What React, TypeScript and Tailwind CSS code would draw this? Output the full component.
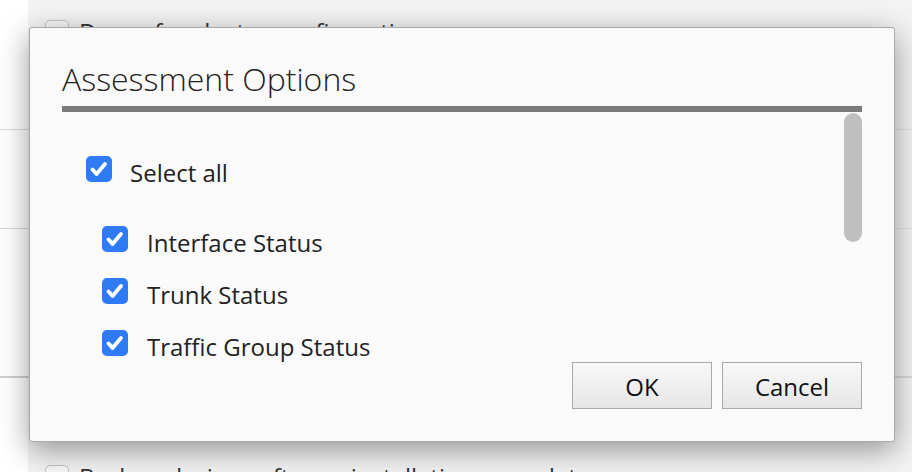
import React from "react";

const CheckMark: React.FC<{ checked?: boolean }> = ({ checked = true }) =>
    checked ? (
        <span className="flex h-[26px] w-[26px] shrink-0 items-center justify-center rounded-[5px] bg-[#2f7bf6]">
            <svg width="26" height="26" viewBox="0 0 26 26" fill="none">
                <path d="M6.5 13.5l4 4.5 8.5-10" stroke="white" strokeWidth="3.8" strokeLinecap="round" strokeLinejoin="round" />
            </svg>
        </span>
    ) : (
        <span className="block h-[24px] w-[24px] shrink-0 rounded-[5px] border border-[#c4c4c4] bg-[#f7f7f7]" />
    );

const BackRow: React.FC<{ label: string; className?: string }> = ({ label, className }) => (
    <div className={"flex shrink-0 items-center gap-[10px] pl-[17px] " + (className ?? "")}>
        <CheckMark checked={false} />
        <span className="whitespace-nowrap text-[24px] leading-[32px] text-[#333]">{label}</span>
    </div>
);

const options = ["Interface Status", "Trunk Status", "Traffic Group Status"];

export default function App() {
    return (
        <div className="relative h-[472px] w-[912px] overflow-hidden bg-white font-['Open_Sans',sans-serif]">
            {/* page behind the dialog */}
            <div className="flex h-full">
                <div className="flex w-[28px] flex-col bg-white">
                    <div className="h-[130px] shrink-0 border-b border-[#dcdcdc]" />
                    <div className="h-[99px] shrink-0 border-b border-[#d6d6d6]" />
                    <div className="h-[149px] shrink-0 border-b-2 border-[#cfcfcf]" />
                </div>
                <div className="flex flex-1 flex-col bg-[#f3f3f3]">
                    <div className="h-[130px] shrink-0 border-b border-[#e2e2e2] pt-[16px]">
                        <BackRow label="Dump for cluster configuration" />
                    </div>
                    <div className="h-[99px] shrink-0 border-b border-[#e2e2e2]" />
                    <div className="h-[149px] shrink-0 border-b-2 border-[#d9d9d9]" />
                    <BackRow label="Backup during software installation or update" className="mt-[83px]" />
                </div>
            </div>

            {/* dialog */}
            <div className="absolute left-[29px] top-[27px] flex h-[415px] w-[866px] flex-col rounded-[3px] border border-[#a9a9a9] bg-[#fafafa] px-[32px] pb-[32px] pt-[32px] shadow-[0_8px_30px_rgba(0,0,0,0.4)]">
                <h2 className="text-[32px] font-light leading-[38px] text-[#222]">Assessment Options</h2>
                <div className="mt-[8px] h-[6px] bg-[#7b7b7b]" />
                <div className="flex h-[250px]">
                    <div className="flex flex-1 flex-col pl-[24px] pt-[44px]">
                        <label className="flex h-[26px] items-center gap-[18px]">
                            <CheckMark />
                            <span className="mt-[8px] text-[24px] leading-[32px] text-[#222]">Select all</span>
                        </label>
                        <div className="mt-[44px] flex flex-col gap-[26px] pl-[16px]">
                            {options.map((o) => (
                                <label key={o} className="flex h-[26px] items-center gap-[19px]">
                                    <CheckMark />
                                    <span className="mt-[8px] text-[24px] leading-[32px] text-[#222]">{o}</span>
                                </label>
                            ))}
                        </div>
                    </div>
                    <div className="w-[18px] pt-[1px]">
                        <div className="h-[129px] rounded-full bg-[#bfbfbf]" />
                    </div>
                </div>
                <div className="flex justify-end gap-[10px]">
                    <button className="h-[47px] w-[140px] border border-[#a9a9a9] bg-gradient-to-b from-[#f8f8f8] to-[#e6e6e6] pt-[2px] text-[24px] text-[#111]">
                        OK
                    </button>
                    <button className="h-[47px] w-[140px] border border-[#a9a9a9] bg-gradient-to-b from-[#f8f8f8] to-[#e6e6e6] pt-[2px] text-[24px] text-[#111]">
                        Cancel
                    </button>
                </div>
            </div>
        </div>
    );
}
